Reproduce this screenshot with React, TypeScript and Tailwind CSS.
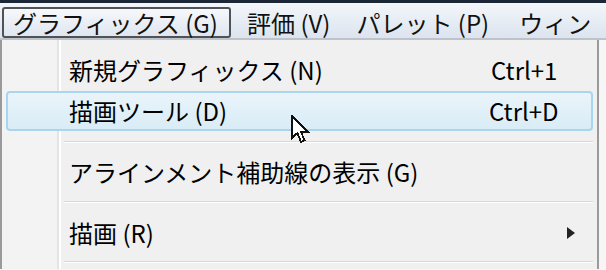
import React from 'react';

const FONT = "font-['Noto_Sans_CJK_JP','Noto_Sans',sans-serif]";

const Separator: React.FC<{ top: number; bottom: number }> = ({ top, bottom }) => (
  <div style={{ paddingTop: top, paddingBottom: bottom }} className="pl-[62px] pr-[4px]">
    <div className="h-[2px] border-t border-[#d7d7d7] bg-white" />
  </div>
);

const Cursor = () => (
  <svg className="absolute left-[291px] top-[115px]" width="24" height="30" viewBox="0 0 12 15" shapeRendering="crispEdges">
    <path d="M0.5 0.5 L0.5 11.5 L3.2 9 L5 13.5 L6.8 12.7 L5 8.5 L8.5 8.5 Z" fill="#fff" stroke="#111" strokeWidth="0.9" strokeLinejoin="miter" />
  </svg>
);

export default function App() {
  return (
    <div className={`relative w-[606px] h-[270px] overflow-hidden bg-[#f6f6f6] text-[24px] leading-none text-black ${FONT}`}>
      {/* window frame top */}
      <div className="h-[3px] bg-[#1b2737]" />

      {/* menu bar */}
      <div className="h-[37px] flex items-stretch bg-[linear-gradient(to_bottom,#f3f6fa,#dce4ef)] border-b-2 border-[#bcc3cb] pt-[4px] whitespace-nowrap">
        <div className="ml-[2px] w-[229px] shrink-0 flex items-center pl-[9px] rounded-[3px] border-2 border-[#4f5257] bg-[linear-gradient(to_bottom,#f6f8fb,#dfe6f0)] text-[#111]">
          グラフィックス (G)
        </div>
        <div className="pl-[16px] shrink-0 flex items-center text-[#111]">評価 (V)</div>
        <div className="pl-[26px] shrink-0 flex items-center text-[#111]">パレット (P)</div>
        <div className="pl-[30px] shrink-0 flex items-center text-[#111]">ウィン</div>
      </div>

      {/* dropdown */}
      <div className="w-[599px] h-[229px] border-x-2 border-[#9a9a9a] bg-[linear-gradient(to_right,#f3f3f3_0,#f3f3f3_55px,#e2e3e3_55px,#e2e3e3_57px,#ffffff_57px,#ffffff_59px,#f0f0f0_59px)] pt-[10px] whitespace-nowrap">
        <div className="h-[40px] flex items-center pl-[67px]">
          <span className="flex-1">新規グラフィックス (N)</span>
          <span className="w-[106px]">Ctrl+1</span>
        </div>
        <div className="mt-[1px] mx-[4px] h-[40px] flex items-center pl-[61px] rounded-[4px] border-2 border-[#a9d6ee] bg-[linear-gradient(to_bottom,#eaf4fa,#d9ecf6)]">
          <span className="flex-1">描画ツール (D)</span>
          <span className="w-[102px]">Ctrl+D</span>
        </div>
        <Separator top={10} bottom={9} />
        <div className="h-[40px] flex items-center pl-[67px]">
          <span className="flex-1">アラインメント補助線の表示 (G)</span>
        </div>
        <Separator top={9} bottom={10} />
        <div className="h-[40px] flex items-center pl-[67px] pr-[22px]">
          <span className="flex-1">描画 (R)</span>
          <svg width="8" height="12" viewBox="0 0 8 12">
            <path d="M0 0 L8 6 L0 12 Z" fill="#222" />
          </svg>
        </div>
        <Separator top={8} bottom={0} />
      </div>

      <Cursor />
    </div>
  );
}
